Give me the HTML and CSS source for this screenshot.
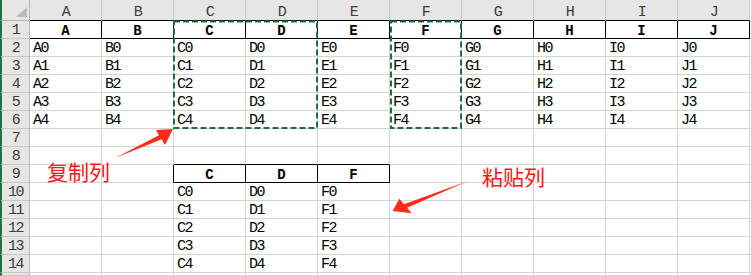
FILE: index.html
```
<!DOCTYPE html>
<html lang="zh-CN">
<head>
<meta charset="utf-8">
<title>复制列 粘贴列</title>
<link rel="stylesheet" href="styles.css">
</head>
<body>
<div class="sheet">
  <div class="corner"><span class="tri"></span></div>
  <div class="ch kb">A</div><div class="ch kb">B</div><div class="ch kb">C</div><div class="ch kb">D</div><div class="ch kb">E</div><div class="ch kb">F</div><div class="ch kb">G</div><div class="ch kb">H</div><div class="ch kb">I</div><div class="ch kb">J</div><div class="e"></div>

  <div class="rh">1</div>
  <div class="h kb kr">A</div><div class="h kb kr">B</div><div class="h kb kr">C</div><div class="h kb kr">D</div><div class="h kb kr">E</div><div class="h kb kr">F</div><div class="h kb kr">G</div><div class="h kb kr">H</div><div class="h kb kr">I</div><div class="h kb kr">J</div><div class="e"></div>

  <div class="rh">2</div>
  <div>A0</div><div>B0</div><div>C0</div><div>D0</div><div>E0</div><div>F0</div><div>G0</div><div>H0</div><div>I0</div><div>J0</div><div class="e"></div>
  <div class="rh">3</div>
  <div>A1</div><div>B1</div><div>C1</div><div>D1</div><div>E1</div><div>F1</div><div>G1</div><div>H1</div><div>I1</div><div>J1</div><div class="e"></div>
  <div class="rh">4</div>
  <div>A2</div><div>B2</div><div>C2</div><div>D2</div><div>E2</div><div>F2</div><div>G2</div><div>H2</div><div>I2</div><div>J2</div><div class="e"></div>
  <div class="rh">5</div>
  <div>A3</div><div>B3</div><div>C3</div><div>D3</div><div>E3</div><div>F3</div><div>G3</div><div>H3</div><div>I3</div><div>J3</div><div class="e"></div>
  <div class="rh">6</div>
  <div>A4</div><div>B4</div><div>C4</div><div>D4</div><div>E4</div><div>F4</div><div>G4</div><div>H4</div><div>I4</div><div>J4</div><div class="e"></div>

  <div class="rh">7</div>
  <div></div><div></div><div></div><div></div><div></div><div></div><div></div><div></div><div></div><div></div><div class="e"></div>
  <div class="rh">8</div>
  <div></div><div></div><div class="kb"></div><div class="kb"></div><div class="kb"></div><div></div><div></div><div></div><div></div><div></div><div class="e"></div>
  <div class="rh">9</div>
  <div></div><div class="kr"></div><div class="h kb kr">C</div><div class="h kb kr">D</div><div class="h kb kr">F</div><div></div><div></div><div></div><div></div><div></div><div class="e"></div>

  <div class="rh">10</div>
  <div></div><div></div><div>C0</div><div>D0</div><div>F0</div><div></div><div></div><div></div><div></div><div></div><div class="e"></div>
  <div class="rh">11</div>
  <div></div><div></div><div>C1</div><div>D1</div><div>F1</div><div></div><div></div><div></div><div></div><div></div><div class="e"></div>
  <div class="rh">12</div>
  <div></div><div></div><div>C2</div><div>D2</div><div>F2</div><div></div><div></div><div></div><div></div><div></div><div class="e"></div>
  <div class="rh">13</div>
  <div></div><div></div><div>C3</div><div>D3</div><div>F3</div><div></div><div></div><div></div><div></div><div></div><div class="e"></div>
  <div class="rh">14</div>
  <div></div><div></div><div>C4</div><div>D4</div><div>F4</div><div></div><div></div><div></div><div></div><div></div><div class="e"></div>
  <div class="rh"></div>
  <div></div><div></div><div></div><div></div><div></div><div></div><div></div><div></div><div></div><div></div><div class="e"></div>

  <svg class="over" width="751" height="276" viewBox="0 0 751 276" aria-hidden="true">
    <rect x="174" y="21.5" width="143" height="106.5" fill="none" stroke="#1f6e40" stroke-width="2" stroke-dasharray="6 3"/>
    <rect x="391" y="21.5" width="70" height="106.5" fill="none" stroke="#1f6e40" stroke-width="2" stroke-dasharray="6 3"/>
    <polygon points="115,158 159,135.3 156,130 173,129 165,145 161.6,139.3" fill="#ff2a1a"/>
    <polygon points="468,181 407,207.8 411.7,213.3 392.7,211 399.3,198.7 404,204.2" fill="#ff2a1a"/>
  </svg>
  <div class="note note-copy">复制列</div>
  <div class="note note-paste">粘贴列</div>
</div>
</body>
</html>
```
FILE: styles.css
```
* { box-sizing: border-box; margin: 0; padding: 0; }
html, body { background: #fff; }
body { width: 751px; height: 276px; overflow: hidden; }

.sheet {
  position: relative;
  display: grid;
  grid-template-columns: 30px repeat(10, 72px) 1px;
  grid-template-rows: 21px repeat(14, 18px) 3px;
  font-family: "Liberation Mono", monospace;
  font-size: 15px;
  line-height: 14px;
  letter-spacing: -1.5px;
  color: #000;
}

.sheet > div {
  display: flex;
  align-items: flex-end;
  padding-left: 3px;
  white-space: nowrap;
  overflow: hidden;
  border-right: 1px solid #d4d4d4;
  border-bottom: 1px solid #d4d4d4;
}

.sheet > .ch {
  background: #e6e6e6;
  justify-content: center;
  padding-left: 0;
  color: #3c3c3c;
  border-right-color: #c8c8c8;
}

.sheet > .corner {
  position: relative;
  background: #e6e6e6;
  border-left: 2px solid #217346;
  border-right-color: #b8b8b8;
  border-bottom-color: #b8b8b8;
}

.tri {
  position: absolute;
  left: 14px;
  top: 7px;
  width: 0;
  height: 0;
  border-left: 11px solid transparent;
  border-bottom: 10px solid #b9b9b9;
}

.sheet > .rh {
  background: #e6e6e6;
  justify-content: center;
  padding-left: 0;
  color: #3c3c3c;
  border-left: 2px solid #217346;
  border-right-color: #b8b8b8;
  border-bottom-color: #c8c8c8;
}

.sheet > .h {
  justify-content: center;
  padding-left: 0;
  font-weight: bold;
  font-size: 14px;
  letter-spacing: 0;
}

.sheet > .kb { border-bottom-color: #000; }
.sheet > .kr { border-right-color: #000; }

.sheet > .e {
  border-right: 0;
  border-bottom-color: #d4d4d4;
  padding: 0;
}

.over {
  position: absolute;
  left: 0;
  top: 0;
  pointer-events: none;
}

.sheet > .note {
  position: absolute;
  display: block;
  border: 0;
  padding: 0;
  overflow: visible;
  font-family: "Noto Sans CJK SC", sans-serif;
  font-size: 21px;
  line-height: 21px;
  letter-spacing: 0;
  color: #ff1414;
}

.sheet > .note-copy { left: 47px; top: 161px; }
.sheet > .note-paste { left: 482px; top: 166px; }
```
